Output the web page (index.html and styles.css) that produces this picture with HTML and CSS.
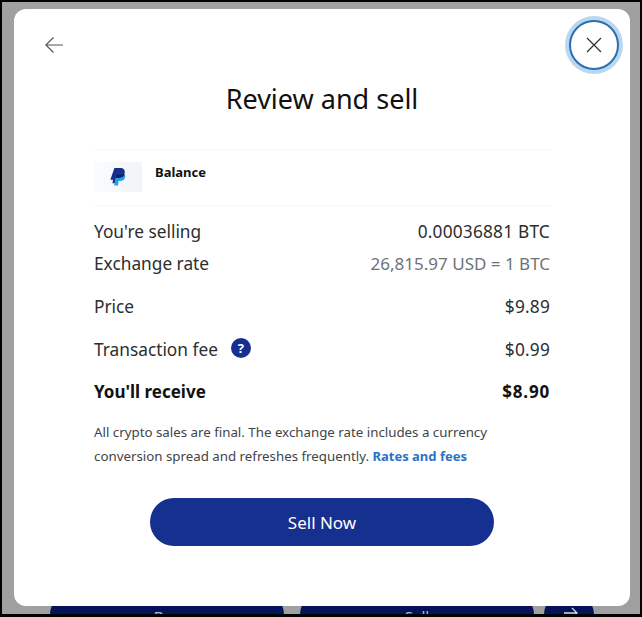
FILE: index.html
```html
<!DOCTYPE html>
<html lang="en">
<head>
<meta charset="utf-8">
<title>Review and sell</title>
<link rel="stylesheet" href="styles.css">
</head>
<body>
<div class="frame">
  <main class="modal">
    <div class="topbar">
      <button class="back" aria-label="Back">
        <svg width="18" height="16" viewBox="0 0 18 16"><path d="M18 8H.8M8.500.5.800 8l7.700 7.500" fill="none" stroke="#555" stroke-width="1.200"/></svg>
      </button>
      <button class="close" aria-label="Close">
        <svg width="16" height="16" viewBox="0 0 16 16"><path d="M1 1l14 14M15 1 1 15" fill="none" stroke="#2c2e2f" stroke-width="1.200"/></svg>
      </button>
    </div>
    <h1 class="title">Review and sell</h1>
    <div class="source">
      <div class="source-logo">
        <svg width="16" height="18" viewBox="0 0 17 20">
          <path d="M4.500 0H11c3.500 0 5.500 2 5 5.200C15.400 9 13 11 9.500 11H7l-1 6H2.300l.7-4H0Z" fill="#16308f"/>
          <path d="M6.500 6h5.800c2.800 0 4.500 1 4.200 3.800C16 13 13.800 14.500 11 14.500H9.200L8.500 19.500H4.300Z" fill="#2b9fe0"/>
          <path d="M6.500 6h5.800c1 0 2.600.2 3.500 1C15 9.500 13 11 9.500 11H5.700Z" fill="#10216e"/>
        </svg>
      </div>
      <span class="source-name">Balance</span>
    </div>
    <div class="rows">
      <div class="row"><span>You're selling</span><span class="amount">0.00036881 BTC</span></div>
      <div class="row row-rate"><span>Exchange rate</span><span class="muted">26,815.97 USD = 1 BTC</span></div>
      <div class="row row-price"><span>Price</span><span class="amount">$9.89</span></div>
      <div class="row row-fee"><span class="fee-label">Transaction fee <span class="help">?</span></span><span class="amount">$0.99</span></div>
      <div class="row row-total"><span>You'll receive</span><span class="total-amount">$8.90</span></div>
    </div>
    <p class="note">All crypto sales are final. The exchange rate includes a currency conversion spread and refreshes frequently. <a class="link" href="#">Rates and fees</a></p>
    <button class="sell">Sell Now</button>
  </main>
  <div class="behind">
    <div class="behind-btn behind-wide">Buy</div>
    <div class="behind-btn behind-wide">Sell</div>
    <div class="behind-btn behind-round">
      <svg width="14" height="12" viewBox="0 0 14 12"><path d="M0 6h13M8 1l5 5-5 5" fill="none" stroke="#d5d8e4" stroke-width="1.300"/></svg>
    </div>
  </div>
</div>
</body>
</html>
```
FILE: styles.css
```css
* { box-sizing: border-box; }
html, body { margin: 0; padding: 0; }
body { font-family: "Noto Sans", "Open Sans", sans-serif; color: #2c2e2f; }
.frame {
  width: 642px; height: 617px; overflow: hidden;
  background: #a0a0a0;
  border: solid #000; border-width: 2px 2px 3px 2px;
  padding: 7px 0 0 12px;
}
.modal {
  width: 616px; height: 597px;
  background: #fff; border-radius: 12px;
  display: flex; flex-direction: column; align-items: stretch;
  padding: 10px 11px 0 28px;
  position: relative; z-index: 1;
}
.topbar { display: flex; justify-content: space-between; height: 52px; }
button { font-family: inherit; border: 0; background: none; padding: 0; }
.back { width: 18px; height: 16px; margin: 18px 0 0 3px; display: flex; }
.close {
  width: 50px; height: 50px; border-radius: 50%; background: #fff;
  border: 2px solid #2a6fb0; box-shadow: 0 0 0 4px #b9d7ee;
  display: flex; align-items: center; justify-content: center;
  margin-top: 1px;
}
.title {
  margin: 8px 0 0 -14px; width: 588px; text-align: center;
  font-size: 27px; font-weight: 400; line-height: 40px; color: #111;
}
.source {
  margin: 30px 0 0 52px; width: 459px; height: 57px;
  border-top: 1px solid #f7f7f7; border-bottom: 1px solid #f7f7f7;
  display: flex; align-items: flex-start; padding-top: 12px; gap: 13px;
}
.source-logo {
  width: 48px; height: 30px; background: linear-gradient(90deg, #fbfcfd, #f1f4f8);
  display: flex; align-items: center; justify-content: center;
}
.source-name { font-size: 13px; font-weight: 700; line-height: 20px; color: #111; }
.rows { margin-left: 52px; width: 456px; padding-top: 13px; }
.row { display: flex; justify-content: space-between; align-items: center; font-size: 17.300px; line-height: 26px; }
.row-rate { margin-top: 6px; }
.row-price { margin-top: 17px; }
.row-fee { margin-top: 17px; }
.row-total { margin-top: 16px; font-size: 17px; font-weight: 700; color: #111; }
.amount { letter-spacing: .2px; }
.total-amount { letter-spacing: .8px; }
.muted { color: #6c7378; font-size: 17px; }
.fee-label { display: flex; align-items: center; gap: 13px; }
.help {
  width: 20px; height: 20px; border-radius: 50%; background: #16308f; color: #fff;
  font-size: 13px; font-weight: 700; line-height: 20px; text-align: center;
  margin-top: -4px;
}
.note { margin: 15px 0 0 52px; width: 440px; font-size: 13.300px; line-height: 24px; color: #3f4447; }
.link { color: #2a72c8; font-weight: 700; font-size: 13px; text-decoration: none; }
.sell {
  margin: 30px 0 0 108px; width: 344px; height: 48px; border-radius: 24px;
  background: #16308f; color: #fff; font-size: 17px; text-align: center;
}
.behind { display: flex; height: 48px; margin: -15px 0 0 36px; gap: 16px; }
.behind-btn {
  height: 48px; background: #04125a; color: #b8bccc; border-radius: 24px;
  font-size: 15px; text-align: center; padding-top: 15px; line-height: 20px;
}
.behind-wide { width: 234px; }
.behind-round {
  width: 50px; border-radius: 25px; margin-left: -6px; padding: 16px 0 0 4px;
  display: flex; justify-content: center; align-items: flex-start;
}
```
